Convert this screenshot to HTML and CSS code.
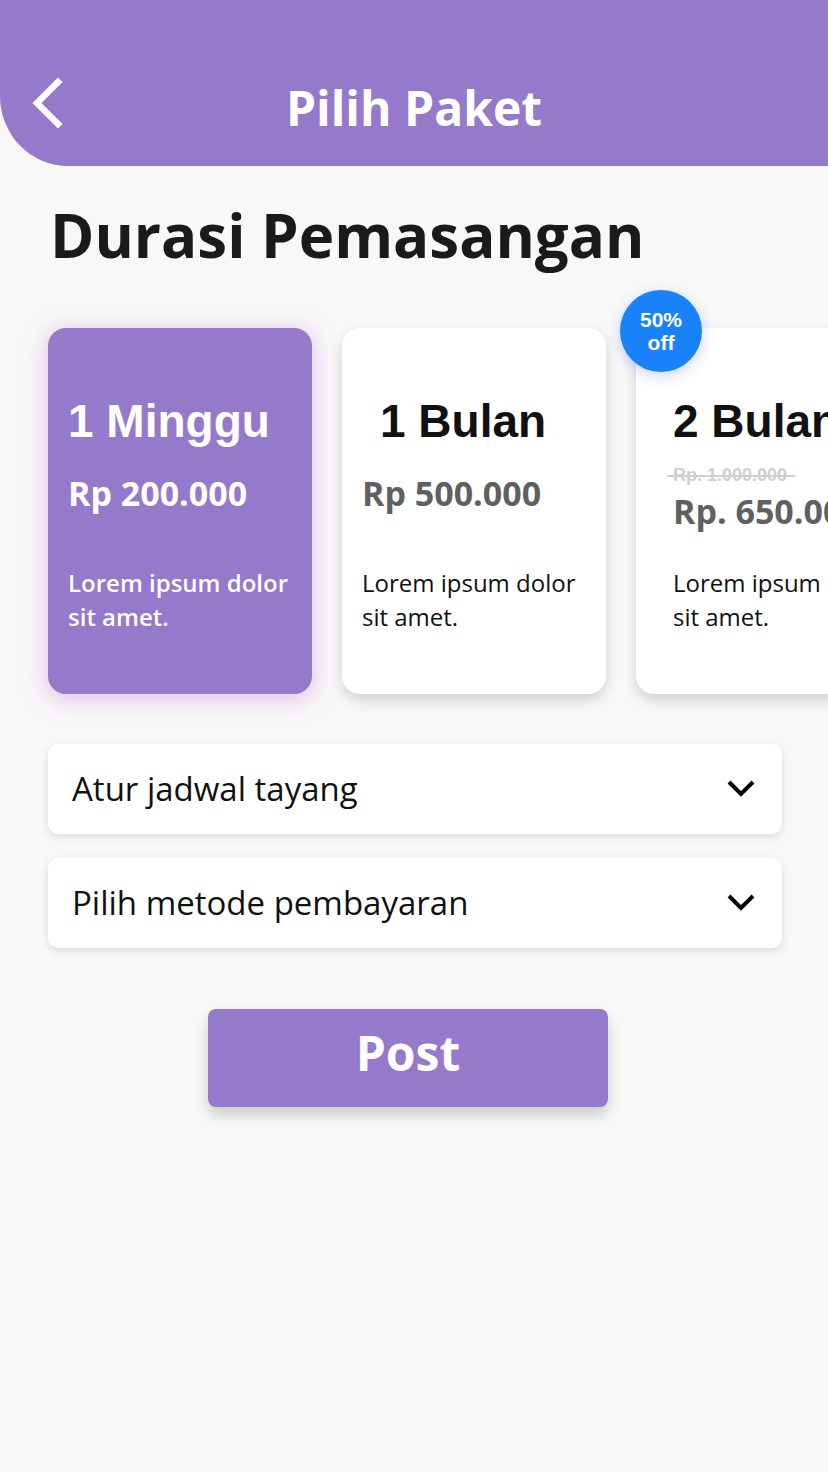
FILE: index.html
```html
<!DOCTYPE html>
<html lang="id">
<head>
<meta charset="utf-8">
<title>Pilih Paket</title>
<link rel="stylesheet" href="styles.css">
</head>
<body>
<div class="page">
  <header class="topbar">
    <svg class="back" width="40" height="56" viewBox="0 0 40 56" aria-hidden="true">
      <polyline points="28,5 7,26 28,47" fill="none" stroke="#fff" stroke-width="6.5" stroke-linecap="square" stroke-linejoin="miter"/>
    </svg>
    <h1 class="topbar-title">Pilih Paket</h1>
  </header>

  <h2 class="section-title">Durasi Pemasangan</h2>

  <div class="cards">
    <div class="card card-active">
      <div class="card-title">1 Minggu</div>
      <div class="card-price">Rp 200.000</div>
      <div class="card-desc">Lorem ipsum dolor sit amet.</div>
    </div>
    <div class="card">
      <div class="card-title card-title-indent">1 Bulan</div>
      <div class="card-price">Rp 500.000</div>
      <div class="card-desc">Lorem ipsum dolor sit amet.</div>
    </div>
    <div class="card card-promo">
      <div class="badge">50%<br>off</div>
      <div class="card-title">2 Bulan</div>
      <div class="old-price"><span class="strike">Rp. 1.000.000</span></div>
      <div class="card-price card-price-promo">Rp. 650.000</div>
      <div class="card-desc card-desc-promo">Lorem ipsum dolor sit amet.</div>
    </div>
  </div>

  <div class="select">
    <span class="select-label">Atur jadwal tayang</span>
    <svg class="chev" width="30" height="20" viewBox="0 0 30 20" aria-hidden="true"><polyline points="3,4 15,16 27,4" fill="none" stroke="#000" stroke-width="4"/></svg>
  </div>
  <div class="select">
    <span class="select-label">Pilih metode pembayaran</span>
    <svg class="chev" width="30" height="20" viewBox="0 0 30 20" aria-hidden="true"><polyline points="3,4 15,16 27,4" fill="none" stroke="#000" stroke-width="4"/></svg>
  </div>

  <div class="actions">
    <button class="post-btn">Post</button>
  </div>
</div>
</body>
</html>
```
FILE: styles.css
```css
* { box-sizing: border-box; }
html, body {
  margin: 0;
  padding: 0;
  background: #f8f8f8;
}
body {
  font-family: "Open Sans", "Noto Sans", sans-serif;
  color: #111;
  width: 828px;
  height: 1472px;
  overflow: hidden;
}
.page { width: 828px; }

.topbar {
  position: relative;
  height: 166px;
  background: #9579cb;
  border-bottom-left-radius: 68px 70px;
  display: flex;
  align-items: center;
  justify-content: center;
}
.back {
  position: absolute;
  left: 30px;
  top: 77px;
}
.topbar-title {
  margin: 0;
  padding-top: 49px;
  font-size: 48px;
  line-height: 60px;
  font-weight: 700;
  color: #fff;
}

.section-title {
  margin: 33px 0 0 50px;
  font-size: 60px;
  line-height: 72px;
  font-weight: 700;
  color: #1a1a1a;
}

.cards {
  display: flex;
  gap: 30px;
  margin-top: 57px;
  padding-left: 48px;
}
.card {
  position: relative;
  flex: 0 0 264px;
  width: 264px;
  min-width: 0;
  height: 366px;
  background: #fff;
  border-radius: 18px;
  padding: 65px 20px 0 20px;
  box-shadow: 0 6px 14px rgba(0,0,0,0.16);
}
.card-active {
  background: #9579cb;
  color: #fff;
  box-shadow: 0 4px 22px 2px rgba(215,160,225,0.6);
}
.card-promo { padding-left: 37px; padding-right: 2px; }

.card-title {
  font-family: "Liberation Sans", Arial, sans-serif;
  font-weight: 700;
  font-size: 46px;
  line-height: 56px;
  color: #111;
  white-space: nowrap;
}
.card-active .card-title { color: #fff; }
.card-title-indent { margin-left: 18px; }

.card-price {
  margin-top: 24px;
  font-size: 34px;
  line-height: 40px;
  font-weight: 700;
  color: #606060;
  white-space: nowrap;
}
.card-active .card-price { color: #fff; }

.card-desc {
  margin-top: 53px;
  font-size: 24px;
  line-height: 34px;
  color: #111;
}
.card-active .card-desc { color: #fff; font-weight: 600; }

.old-price {
  margin-top: 16px;
  height: 20px;
  line-height: 20px;
}
.strike {
  position: relative;
  font-family: "Liberation Sans", Arial, sans-serif;
  font-weight: 700;
  font-size: 18px;
  color: #cfcfcf;
}
.strike::after {
  content: "";
  position: absolute;
  left: -6px;
  right: -8px;
  top: 10px;
  height: 2px;
  background: #cfcfcf;
}
.card-price-promo { margin-top: 6px; }
.card-desc-promo { margin-top: 35px; }

.badge {
  position: absolute;
  left: -16px;
  top: -38px;
  width: 82px;
  height: 82px;
  border-radius: 50%;
  background: #1a82f8;
  color: #fff;
  font-family: "Liberation Sans", Arial, sans-serif;
  font-weight: 700;
  font-size: 21px;
  line-height: 23px;
  text-align: center;
  display: flex;
  align-items: center;
  justify-content: center;
  box-shadow: 0 4px 14px rgba(60,80,255,0.25);
}

.select {
  margin: 50px 46px 0 48px;
  height: 90px;
  background: #fff;
  border-radius: 10px;
  box-shadow: 0 3px 8px rgba(0,0,0,0.12);
  display: flex;
  align-items: center;
  justify-content: space-between;
  padding: 0 26px 0 24px;
}
.select + .select { margin-top: 24px; }
.select-label {
  font-size: 33px;
  line-height: 42px;
  color: #111;
}
.chev { display: block; margin-top: -2px; }

.actions {
  display: flex;
  justify-content: center;
  margin-top: 61px;
  padding-right: 12px;
}
.post-btn {
  width: 400px;
  height: 98px;
  border: none;
  border-radius: 8px;
  background: #9579cb;
  color: #fff;
  font-family: "Open Sans", "Noto Sans", sans-serif;
  font-weight: 700;
  font-size: 48px;
  line-height: 60px;
  padding: 0 0 10px 0;
  box-shadow: 0 8px 14px rgba(0,0,0,0.18);
}
```
